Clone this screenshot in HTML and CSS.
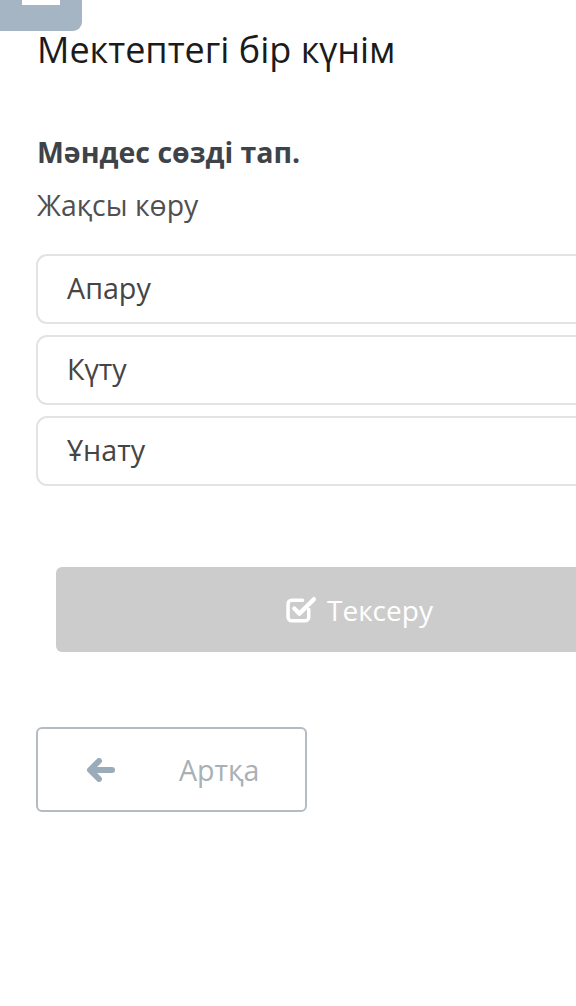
FILE: index.html
```html
<!DOCTYPE html>
<html lang="kk">
<head>
<meta charset="utf-8">
<link rel="stylesheet" href="styles.css">
</head>
<body>
<div class="page">
  <div class="tab"><span class="tab-bar"></span></div>
  <h1 class="title">Мектептегі бір күнім</h1>
  <p class="task">Мәндес сөзді тап.</p>
  <p class="word">Жақсы көру</p>
  <div class="options">
    <div class="option">Апару</div>
    <div class="option">Күту</div>
    <div class="option">Ұнату</div>
  </div>
  <div class="check-wrap">
    <div class="check-btn">
      <svg class="check-icon" viewBox="0 0 30 28" width="31" height="29">
        <path d="M22 14v7.5a3.5 3.5 0 0 1-3.5 3.5H5.5a3.5 3.5 0 0 1-3.5-3.5V8.5A3.5 3.5 0 0 1 5.5 5H16" fill="none" stroke="#fff" stroke-width="3.4" stroke-linecap="round"/>
        <path d="M8 13l5 5L27 4" fill="none" stroke="#fff" stroke-width="4.2" stroke-linecap="round" stroke-linejoin="round"/>
      </svg>
      <span>Тексеру</span>
    </div>
  </div>
  <div class="back-btn">
    <svg class="arrow" viewBox="0 0 28 24" width="28" height="24">
      <path d="M12 3L3 12l9 9M4 12h21" fill="none" stroke="#9aacba" stroke-width="6" stroke-linecap="round" stroke-linejoin="round"/>
    </svg>
    <span>Артқа</span>
  </div>
</div>
</body>
</html>
```
FILE: styles.css
```css
html, body {
  margin: 0;
  padding: 0;
  background: #fff;
  overflow: hidden;
}
.page {
  width: 576px;
  height: 1006px;
  position: relative;
  overflow: hidden;
  font-family: "Open Sans", "Noto Sans", sans-serif;
}
.tab {
  position: absolute;
  left: 0;
  top: 0;
  width: 82px;
  height: 31px;
  background: #a5b5c3;
  border-bottom-right-radius: 9px;
}
.tab-bar {
  position: absolute;
  left: 22px;
  top: 0;
  width: 38px;
  height: 5px;
  background: #fff;
}
.title {
  margin: 0;
  padding: 29px 0 0 37px;
  font-size: 36px;
  font-weight: 400;
  line-height: 42px;
  color: #1b1b1b;
}
.task {
  margin: 0;
  padding: 63px 0 0 37px;
  font-size: 28.5px;
  font-weight: 700;
  line-height: 36px;
  color: #3e4349;
}
.word {
  margin: 0;
  padding: 17px 0 0 37px;
  font-size: 28.4px;
  line-height: 36px;
  color: #505050;
}
.options {
  margin: 31px 0 0 36px;
  display: flex;
  flex-direction: column;
  gap: 11px;
  width: 700px;
}
.option {
  height: 63px;
  padding-bottom: 3px;
  border: 2px solid #e3e3e3;
  border-radius: 11px;
  box-sizing: content-box;
  display: flex;
  align-items: center;
  padding-left: 29px;
  font-size: 28.7px;
  color: #454545;
}
.check-wrap {
  margin: 81px 0 0 56px;
  width: 760px;
}
.check-btn {
  height: 85px;
  background: #cccccc;
  border-radius: 6px;
  display: flex;
  align-items: center;
  padding-left: 230px;
  gap: 10px;
  color: #fff;
  font-size: 28px;
}
.back-btn {
  margin: 75px 0 0 36px;
  width: 267px;
  height: 81px;
  border: 2px solid #b4bcc3;
  border-radius: 6px;
  display: flex;
  align-items: center;
  color: #a9b0b6;
  font-size: 28.6px;
}
.arrow {
  margin-left: 49px;
}
.back-btn span {
  margin-left: 64px;
}
```
